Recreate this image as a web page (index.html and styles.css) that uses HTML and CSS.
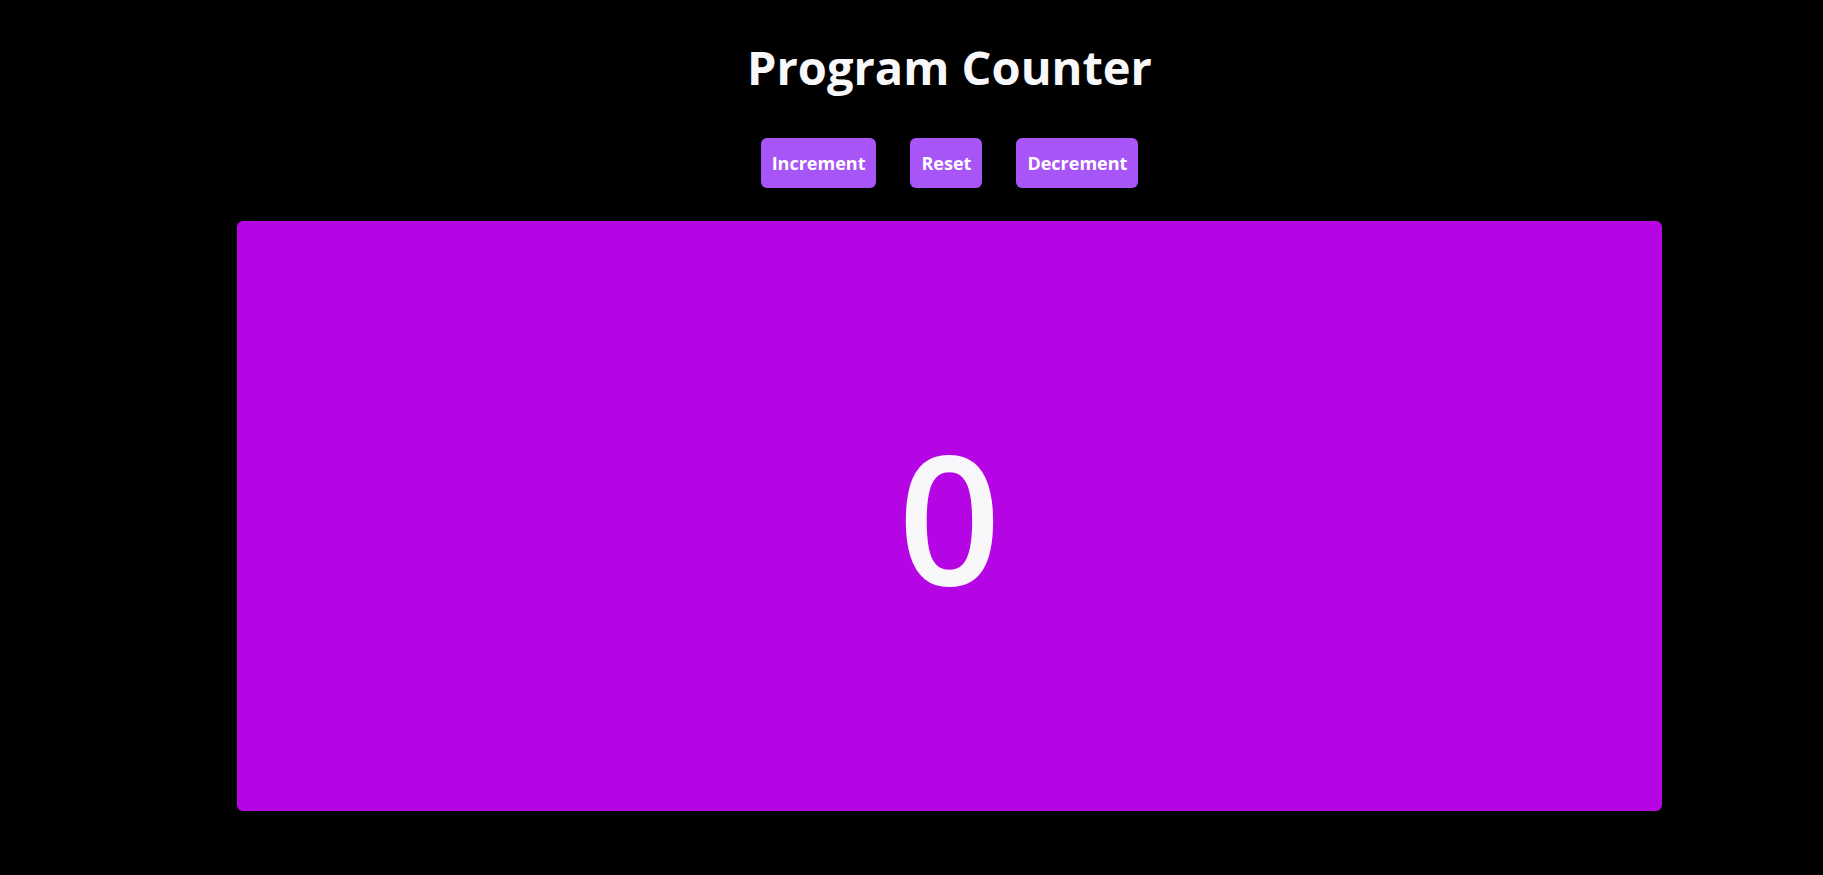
FILE: index.html
```html
<!DOCTYPE html>
<html lang="en">
<head>
<meta charset="utf-8">
<title>Program Counter</title>
<link rel="stylesheet" href="styles.css">
</head>
<body>
<main class="app">
  <h1 class="title">Program Counter</h1>
  <div class="controls">
    <button class="btn">Increment</button>
    <button class="btn">Reset</button>
    <button class="btn">Decrement</button>
  </div>
  <section class="display">
    <span class="count">0</span>
  </section>
</main>
</body>
</html>
```
FILE: styles.css
```css
html, body {
  margin: 0;
  padding: 0;
  background: #000;
}
body {
  font-family: "Open Sans", "Noto Sans", "Liberation Sans", sans-serif;
  color: #f8f8fa;
}
.app {
  display: flex;
  flex-direction: column;
  align-items: center;
  padding-left: 76px;
  padding-top: 44px;
}
.title {
  margin: 0;
  font-size: 47px;
  line-height: 1;
  font-weight: 700;
  color: #f8f8fa;
}
.controls {
  display: flex;
  gap: 34px;
  margin-top: 47px;
}
.btn {
  font-family: inherit;
  font-size: 18px;
  font-weight: 700;
  color: #fff;
  background: #a855f7;
  border: none;
  border-radius: 6px;
  height: 50px;
  padding: 0 11px;
  cursor: pointer;
}
.display {
  margin-top: 33px;
  width: 1425px;
  height: 590px;
  background: #b505e5;
  border-radius: 6px;
  display: flex;
  align-items: center;
  justify-content: center;
}
.count {
  font-size: 180px;
  line-height: 1;
  font-weight: 600;
  color: #f8f8fa;
}
```
